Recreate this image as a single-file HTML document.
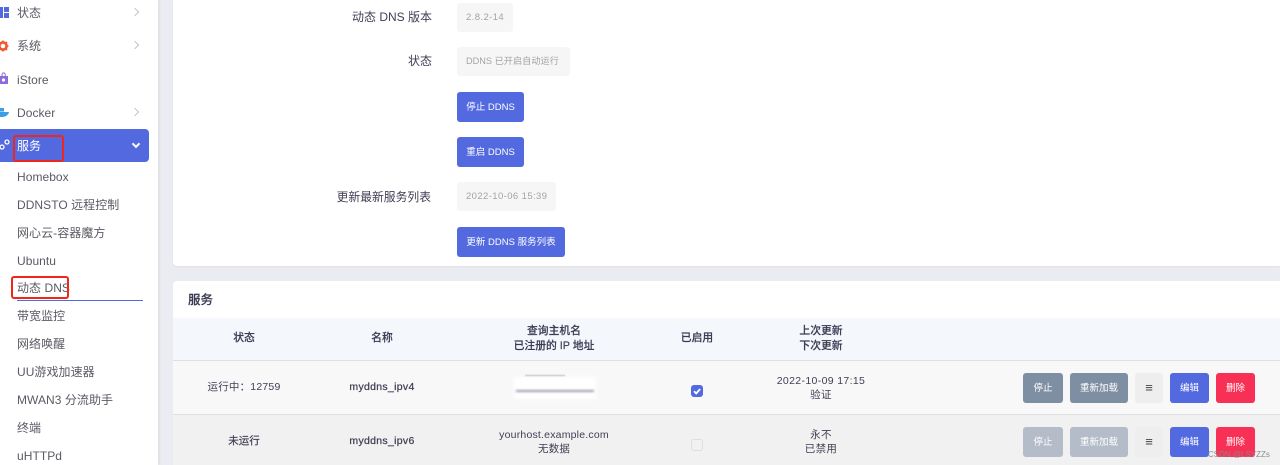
<!DOCTYPE html>
<html><head><meta charset="utf-8"><style>
*{box-sizing:border-box}
html,body{margin:0;padding:0;width:1280px;height:465px;overflow:hidden;background:#eaecf1;font-family:"Liberation Sans","Noto Sans CJK SC",sans-serif}
div,span{position:absolute;white-space:nowrap}
.side{left:0;top:0;width:158px;height:465px;background:#fff;box-shadow:1px 0 3px rgba(0,0,0,.08)}
.m{left:17px;font-size:12px;line-height:18px;color:#5a5a64;letter-spacing:.05px}
.ar{left:132px;width:6px;height:6px;border-top:1.5px solid #c3c5ca;border-right:1.5px solid #c3c5ca;transform:rotate(45deg)}
.card{background:#fff;left:173px;width:1107px}
.lb{right:848px;font-size:12px;line-height:18px;color:#3f3f55}
.val{left:457px;height:29px;background:#f6f6f6;border-radius:3px;color:#a3a3a3;font-size:9.5px;line-height:29px;padding:0 9px;letter-spacing:.4px}
.btn{background:#5369e0;color:#fff;border-radius:3px;height:30px;line-height:31px;font-size:9.5px;text-align:center}
.c{text-align:center;transform:translateX(-50%);color:#3f3f55;font-size:10.5px;line-height:14px}
.th{font-weight:500;color:#3c3c54;font-size:10.8px;line-height:15px;-webkit-text-stroke:.15px #3c3c54}
.n{-webkit-text-stroke:.25px #3f3f55;letter-spacing:.3px}
.b{top:373px;height:30px;line-height:31px;font-size:9.5px;color:#fff;text-align:center;border-radius:3px}
.r2{top:427px}
.e{font-size:13px;line-height:30px}
</style></head><body>
<div class="side"></div>
<svg style="position:absolute;left:0;top:0" width="16" height="160" viewBox="0 0 16 160">
<g fill="#5369e0"><rect x="0" y="7" width="3" height="11"/><rect x="4" y="7" width="5" height="5"/><rect x="4" y="13" width="5" height="5"/></g>
<circle cx="3" cy="46" r="3.6" fill="none" stroke="#f4552f" stroke-width="2.6"/>
<path d="M-1 46h-1M3 40.5v2M3 49.5v2M8.5 46h-2M7 42l-1.4 1.4M7 50l-1.4-1.4" stroke="#f4552f" stroke-width="1.6" fill="none"/>
<path d="M0 76h8v8H0z" fill="#8e6bdc"/><circle cx="3.5" cy="80" r="1.6" fill="#fff"/><path d="M2 76v-1.5a1.6 1.6 0 0 1 3.2 0V76" fill="none" stroke="#8e6bdc"/>
<path d="M0 112h9c-.5 3-3.5 5-7 5H0z" fill="#3a9fe4"/><rect x="0" y="108" width="4" height="3.5" fill="#3a9fe4"/>
</svg>
<div class="m" style="top:4px">状态</div><div class="ar" style="top:9px"></div>
<div class="m" style="top:37px">系统</div><div class="ar" style="top:42px"></div>
<div class="m" style="top:71px">iStore</div>
<div class="m" style="top:104px">Docker</div><div class="ar" style="top:109px"></div>
<div style="left:-6px;top:129px;width:155px;height:33px;background:#5369e0;border-radius:4px"></div>
<svg style="position:absolute;left:0;top:138px" width="10" height="14"><circle cx="7" cy="4" r="2" fill="none" stroke="#fff" stroke-width="1.3"/><circle cx="2" cy="9" r="2" fill="none" stroke="#fff" stroke-width="1.3"/></svg>
<div class="m" style="top:137px;color:#fff">服务</div>
<div style="left:133px;top:141px;width:6px;height:6px;border-right:2px solid #fff;border-bottom:2px solid #fff;transform:rotate(45deg)"></div>
<div style="left:13px;top:135px;width:51px;height:27px;border:2px solid #f0261c;border-radius:3px"></div>
<div class="m" style="top:168px">Homebox</div>
<div class="m" style="top:196px">DDNSTO 远程控制</div>
<div class="m" style="top:224px">网心云-容器魔方</div>
<div class="m" style="top:252px">Ubuntu</div>
<div class="m" style="top:279px">动态 DNS</div>
<div style="left:11px;top:276px;width:58px;height:23px;border:2px solid #f0261c;border-radius:3px"></div>
<div style="left:17px;top:300px;width:126px;height:1px;background:#5369e0"></div>
<div class="m" style="top:307px">带宽监控</div>
<div class="m" style="top:335px">网络唤醒</div>
<div class="m" style="top:363px">UU游戏加速器</div>
<div class="m" style="top:391px">MWAN3 分流助手</div>
<div class="m" style="top:419px">终端</div>
<div class="m" style="top:447px">uHTTPd</div>

<div class="card" style="top:0;height:266px;border-radius:0 0 0 4px;box-shadow:0 1px 2px rgba(0,0,0,.05)"></div>
<div class="lb" style="top:8px">动态 DNS 版本</div><div class="val" style="top:3px;width:56px">2.8.2-14</div>
<div class="lb" style="top:52px">状态</div><div class="val" style="top:47px;width:113px;font-size:9.2px;letter-spacing:0">DDNS 已开启自动运行</div>
<div class="btn" style="left:457px;top:92px;width:67px">停止 DDNS</div>
<div class="btn" style="left:457px;top:137px;width:67px">重启 DDNS</div>
<div class="lb" style="top:188px;right:849px;font-size:11.8px">更新最新服务列表</div><div class="val" style="top:182px;width:99px">2022-10-06 15:39</div>
<div class="btn" style="left:457px;top:227px;width:108px">更新 DDNS 服务列表</div>

<div class="card" style="top:281px;height:184px;border-radius:4px 0 0 0"></div>
<div style="left:188px;top:291px;font-size:12.5px;line-height:18px;font-weight:500;-webkit-text-stroke:.2px #3c3c54;color:#3c3c54">服务</div>
<div style="left:173px;top:318px;width:1107px;height:43px;background:#f4f7fc;border-bottom:1px solid #dfe0e3"></div>
<div style="left:173px;top:361px;width:1107px;height:54px;background:#f8f8f8;border-bottom:1px solid #dfe0e3"></div>
<div style="left:173px;top:415px;width:1107px;height:50px;background:#f1f1f1"></div>

<div class="c th" style="left:244px;top:331px">状态</div>
<div class="c th" style="left:382px;top:331px">名称</div>
<div class="c th" style="left:554px;top:324px">查询主机名<br>已注册的 IP 地址</div>
<div class="c th" style="left:697px;top:331px">已启用</div>
<div class="c th" style="left:821px;top:324px">上次更新<br>下次更新</div>

<div class="c" style="left:244px;top:380px;letter-spacing:.2px">运行中：12759</div>
<div class="c n" style="left:382px;top:380px">myddns_ipv4</div>
<div style="left:514px;top:377px;width:82px;height:22px;background:#fff;filter:blur(2px)"></div>
<div style="left:516px;top:390px;width:78px;height:2px;background:#9a9aa8;filter:blur(1px)"></div>
<div style="left:525px;top:375px;width:40px;height:1px;background:#b5b5c0;filter:blur(.6px)"></div>
<div style="left:691px;top:385px;width:12px;height:12px;background:#5369e0;border-radius:3px"></div>
<svg style="position:absolute;left:691px;top:385px" width="12" height="12"><path d="M3 6.2l2.2 2.2L9.2 4" fill="none" stroke="#fff" stroke-width="1.8"/></svg>
<div class="c" style="left:821px;top:374px;letter-spacing:.35px">2022-10-09 17:15<br>验证</div>
<div class="b" style="left:1023px;width:40px;background:#7f8fa3">停止</div>
<div class="b" style="left:1070px;width:58px;background:#7f8fa3">重新加载</div>
<div class="b e" style="left:1135px;width:28px;background:#eeeeee;color:#444">≡</div>
<div class="b" style="left:1170px;width:39px;background:#5369e0">编辑</div>
<div class="b" style="left:1216px;width:39px;background:#f93055">删除</div>

<div class="c" style="left:244px;top:434px;-webkit-text-stroke:.2px #3f3f55">未运行</div>
<div class="c n" style="left:382px;top:434px">myddns_ipv6</div>
<div class="c" style="left:554px;top:428px;letter-spacing:.2px">yourhost.example.com<br>无数据</div>
<div style="left:691px;top:439px;width:12px;height:12px;background:#f1f1f1;border:1px solid #dedede;border-radius:3px"></div>
<div class="c" style="left:821px;top:428px;letter-spacing:.35px">永不<br>已禁用</div>
<div class="b r2" style="left:1023px;width:40px;background:#b3bcc8">停止</div>
<div class="b r2" style="left:1070px;width:58px;background:#b3bcc8">重新加载</div>
<div class="b e r2" style="left:1135px;width:28px;background:#eeeeee;color:#444">≡</div>
<div class="b r2" style="left:1170px;width:39px;background:#5369e0">编辑</div>
<div class="b r2" style="left:1216px;width:39px;background:#f93055">删除</div>
<div style="left:1208px;top:449px;font-size:8px;line-height:11px;color:rgba(135,135,135,.95)">CSDN @LSYZZs</div>
</body></html>
